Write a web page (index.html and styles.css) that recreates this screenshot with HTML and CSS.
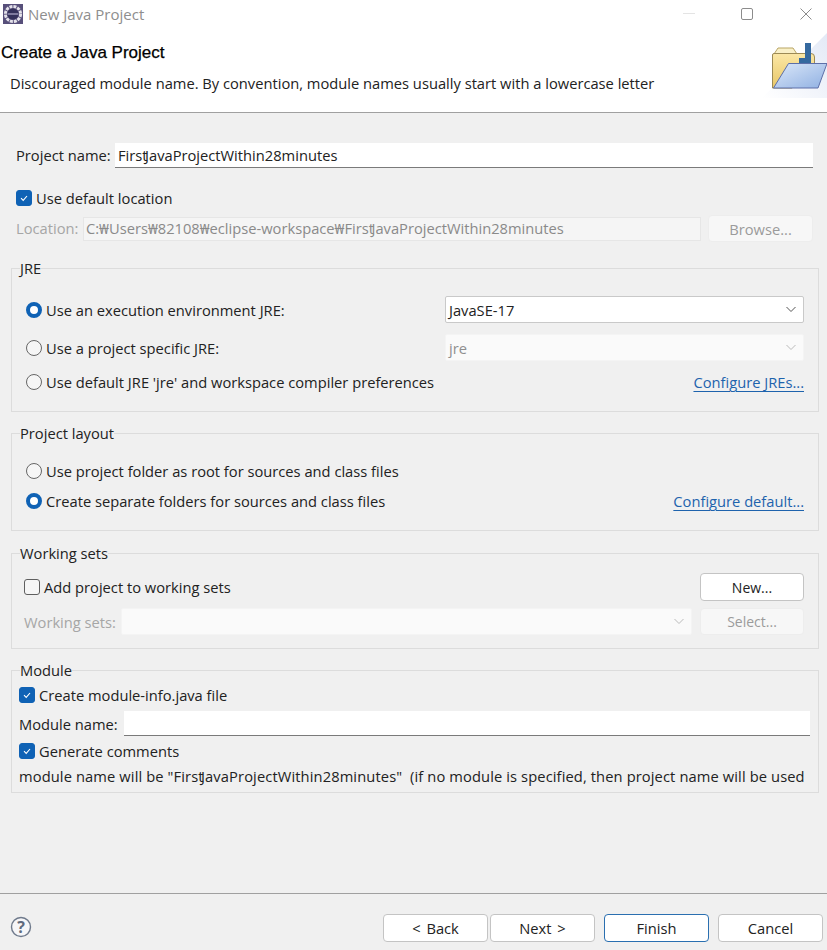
FILE: index.html
```html
<!DOCTYPE html>
<html lang="en">
<head>
<meta charset="utf-8">
<title>New Java Project</title>
<link rel="stylesheet" href="styles.css">
</head>
<body>
<div class="dialog">
  <header class="titlebar">
    <svg class="app-icon" width="20" height="20" viewBox="0 0 20 20"><rect width="20" height="20" fill="#574f7a"/><circle cx="10" cy="10" r="7.6" fill="none" stroke="#e4e2ea" stroke-width="3" stroke-dasharray="3 1"/><circle cx="10" cy="10" r="5.6" fill="#34315a"/><path d="M4.6 9h10.8v2H4.6z" fill="#7f7b9e"/></svg>
    <span class="title-text">New Java Project</span>
    <div class="win-controls">
      <span class="win-min"></span>
      <svg class="win-max" width="12" height="12" viewBox="0 0 12 12"><rect x=".5" y=".5" width="11" height="11" rx="1.5" fill="none" stroke="#8c8c8c"/></svg>
      <svg class="win-close" width="12" height="12" viewBox="0 0 12 12"><path d="M.5.5l11 11M11.5.5l-11 11" stroke="#8c8c8c" fill="none"/></svg>
    </div>
  </header>
  <section class="banner">
    <div class="banner-text">
      <h1>Create a Java Project</h1>
      <p>Discouraged module name. By convention, module names usually start with a lowercase letter</p>
    </div>
    <div class="banner-art">
      <svg width="67" height="68" viewBox="0 0 67 68">
        <defs>
          <linearGradient id="wash" x1="0" y1="1" x2="1" y2="0"><stop offset="0" stop-color="#fff"/><stop offset="1" stop-color="#e3e9f6"/></linearGradient>
          <linearGradient id="back" x1="0" y1="0" x2="0" y2="1"><stop offset="0" stop-color="#fbe7a6"/><stop offset="1" stop-color="#e8c767"/></linearGradient>
          <linearGradient id="front" x1="0" y1="0" x2="1" y2="1"><stop offset="0" stop-color="#dce8f9"/><stop offset="1" stop-color="#8fb0e2"/></linearGradient>
        </defs>
        <path d="M2 68 L67 3 V68Z" fill="url(#wash)"/>
        <path d="M14 24 L18 18 H33 L37 24Z" fill="#f9f0c8" stroke="#b9a565"/>
        <path d="M12.5 58 V25 Q12.5 23.5 14 23.5 H51 Q54.5 23.5 54.5 27 V40 L32 58Z" fill="url(#back)" stroke="#9c8a55"/>
        <path d="M45 13 H51 V33 H39 V28 H45Z" fill="#35699f"/>
        <path d="M28.5 33.5 H67 L58 58 H13.5Z" fill="url(#front)" stroke="#5d6fa8"/>
      </svg>
    </div>
  </section>
  <main class="content">
    <div class="row name-row">
      <label class="label">Project name:</label>
      <div class="field">Firs<span class="tj">t</span>JavaProjectWithin28minutes</div>
    </div>
    <div class="check-row default-loc"><span class="check on"><svg width="10" height="10" viewBox="0 0 10 10"><path d="M2 5.2l2.2 2.2L8 3" fill="none" stroke="#fff" stroke-width="1.1"/></svg></span><span>Use default location</span></div>
    <div class="row loc-row">
      <label class="label muted">Location:</label>
      <div class="field-off">C:₩Users₩82108₩eclipse-workspace₩Firs<span class="tj">t</span>JavaProjectWithin28minutes</div>
      <button class="btn off browse">Browse...</button>
    </div>

    <fieldset class="group jre">
      <legend>JRE</legend>
      <div class="opt-row r1">
        <div class="radio-line"><span class="radio on"></span><span>Use an execution environment JRE:</span></div>
        <div class="combo"><span>JavaSE-17</span><svg width="12" height="7" viewBox="0 0 12 7"><path d="M1.5 1l4.5 4.5L10.5 1" fill="none" stroke="#555"/></svg></div>
      </div>
      <div class="opt-row r2">
        <div class="radio-line"><span class="radio"></span><span>Use a project specific JRE:</span></div>
        <div class="combo off"><span>jre</span><svg width="12" height="7" viewBox="0 0 12 7"><path d="M1.5 1l4.5 4.5L10.5 1" fill="none" stroke="#bbb"/></svg></div>
      </div>
      <div class="opt-row r3">
        <div class="radio-line"><span class="radio"></span><span>Use default JRE 'jre' and workspace compiler preferences</span></div>
        <a class="link">Configure JREs...</a>
      </div>
    </fieldset>

    <fieldset class="group layout">
      <legend>Project layout</legend>
      <div class="opt-row l1">
        <div class="radio-line"><span class="radio"></span><span>Use project folder as root for sources and class files</span></div>
      </div>
      <div class="opt-row l2">
        <div class="radio-line"><span class="radio on"></span><span>Create separate folders for sources and class files</span></div>
        <a class="link">Configure default...</a>
      </div>
    </fieldset>

    <fieldset class="group wsets">
      <legend>Working sets</legend>
      <div class="opt-row w1">
        <div class="check-row"><span class="check"></span><span>Add project to working sets</span></div>
        <button class="btn wbtn">New...</button>
      </div>
      <div class="opt-row w2">
        <label class="label muted">Working sets:</label>
        <div class="combo off grow"><span></span><svg width="12" height="7" viewBox="0 0 12 7"><path d="M1.5 1l4.5 4.5L10.5 1" fill="none" stroke="#bbb"/></svg></div>
        <button class="btn off wbtn">Select...</button>
      </div>
    </fieldset>

    <fieldset class="group module">
      <legend>Module</legend>
      <div class="check-row m1"><span class="check on"><svg width="10" height="10" viewBox="0 0 10 10"><path d="M2 5.2l2.2 2.2L8 3" fill="none" stroke="#fff" stroke-width="1.1"/></svg></span><span>Create module-info.java file</span></div>
      <div class="row m2">
        <label class="label">Module name:</label>
        <div class="field"></div>
      </div>
      <div class="check-row m3"><span class="check on"><svg width="10" height="10" viewBox="0 0 10 10"><path d="M2 5.2l2.2 2.2L8 3" fill="none" stroke="#fff" stroke-width="1.1"/></svg></span><span>Generate comments</span></div>
      <p class="note">module name will be "Firs<span class="tj">t</span>JavaProjectWithin28minutes"&nbsp; (if no module is specified, then project name will be used</p>
    </fieldset>
  </main>
  <footer class="footer">
    <svg class="help" width="22" height="22" viewBox="0 0 22 22"><circle cx="11" cy="11" r="9.5" fill="#f6f6f8" stroke="#6f7a8c" stroke-width="1.4"/><text x="11" y="16.5" text-anchor="middle" class="help-mark">?</text></svg>
    <div class="footer-btns">
      <div class="nav-pair"><button class="btn fbtn">&lt; Back</button><button class="btn fbtn">Next &gt;</button></div>
      <button class="btn fbtn primary">Finish</button>
      <button class="btn fbtn">Cancel</button>
    </div>
  </footer>
</div>
</body>
</html>
```
FILE: styles.css
```css
* { box-sizing: border-box; }
html, body { margin: 0; padding: 0; }
body { width: 827px; height: 950px; overflow: hidden; font-family: "Open Sans", "Noto Sans", sans-serif; font-size: 14.7px; color: #222; background: #f0f0f0; }
.dialog { display: flex; flex-direction: column; height: 950px; }
.tj { letter-spacing: -2.5px; }

.titlebar { height: 27px; background: #fff; display: flex; align-items: center; padding: 0 0 0 3px; flex: none; }
.app-icon { flex: none; }
.title-text { margin-left: 5px; color: #8e8e8e; font-size: 15px; }
.win-controls { margin-left: auto; display: flex; align-items: center; }
.win-min { width: 12px; height: 1px; background: #e4e4e4; margin-right: 46px; }
.win-max { margin-right: 47px; }
.win-close { margin-right: 15px; }

.banner { height: 86px; background: #fff; border-bottom: 1px solid #a0a0a0; display: flex; justify-content: space-between; flex: none; }
.banner-text { padding-top: 15px; }
.banner h1 { margin: 0; padding-left: 1px; font-family: "Liberation Sans", sans-serif; font-size: 17px; font-weight: 400; color: #000; -webkit-text-stroke: .25px #000; line-height: 21px; white-space: nowrap; }
.banner p { margin: 10px 0 0 10px; line-height: 20px; color: #222; white-space: nowrap; }
.banner-art { padding-top: 3px; }

.content { flex: 1; padding: 0 8px 0 11px; display: flex; flex-direction: column; }
.row { display: flex; align-items: center; }
.label { flex: none; white-space: nowrap; }
.muted { color: #a6a6a6; }
.name-row { margin: 29px 6px 0 5px; height: 26px; }
.name-row .label { width: 99px; }
.field { flex: 1; height: 25px; background: #fff; border-bottom: 1px solid #7a7a7a; padding-left: 3px; line-height: 24px; }
.check-row { display: flex; align-items: center; }
.check { flex: none; width: 16px; height: 16px; border: 1px solid #5f5f5f; border-radius: 3px; background: #f6f6f6; display: flex; align-items: center; justify-content: center; margin-right: 4px; }
.check.on { background: #0f62b5; border-color: #0f62b5; }
.default-loc { margin: 18px 0 0 5px; height: 24px; }
.loc-row { margin: 5px 6px 0 5px; height: 27px; }
.loc-row .label { width: 67px; padding-bottom: 2px; }
.field-off { width: 618px; height: 24px; background: #f5f5f5; border: 1px solid #e6e6e6; color: #8a8a8a; padding-left: 2px; line-height: 21px; white-space: nowrap; }
.browse { margin-left: 7px; width: 105px; height: 27px; font-size: 14px; }

.btn { font: inherit; color: #222; background: #fff; border: 1px solid #c4c4c4; border-radius: 4px; padding: 0; }
.btn.off { background: #f7f7f7; border-color: #ededed; color: #9b9b9b; }

.group { margin: 0; padding: 0 14px; border: 1px solid #dcdcdc; display: block; min-width: 0; flex: none; }
.group legend { padding: 0; margin-left: -6px; line-height: 20px; height: 20px; }
.opt-row { display: flex; align-items: center; justify-content: space-between; }
.radio-line { display: flex; align-items: center; }
.radio { flex: none; width: 16px; height: 16px; border-radius: 50%; border: 1px solid #666; background: #f6f6f6; margin-right: 4px; }
.radio.on { border: 4.5px solid #0f62b5; background: #fff; }
.combo { width: 359px; height: 27px; background: #fff; border: 1px solid #c9c9c9; border-radius: 2px; display: flex; align-items: center; justify-content: space-between; padding: 0 6px 0 3px; }
.combo.off { background: #fafafa; border-color: #f4f4f4; color: #8f8f8f; }
.grow { flex: 1; width: auto; }
.link { color: #1e63ad; text-decoration: underline; text-underline-offset: 3px; }

.jre { margin-top: 16px; height: 154px; }
.r1 { margin-top: 18px; height: 27px; }
.r2 { margin-top: 11px; height: 27px; }
.r3 { margin-top: 9px; height: 24px; }

.layout { margin-top: 11px; height: 108px; }
.l1 { margin-top: 16px; height: 24px; }
.l2 { margin-top: 6px; height: 24px; }

.wsets { margin-top: 12px; height: 106px; padding: 0 14px 0 12px; }
.wsets legend { margin-left: -4px; }
.w1 { margin-top: 10px; height: 28px; }
.w2 { margin-top: 7px; height: 27px; }
.wbtn { width: 104px; height: 28px; font-size: 14px; }
.w2 .wbtn { height: 27px; }
.w2 .label { width: 97px; }
.w2 .combo { margin-right: 8px; }

.module { margin-top: 11px; height: 133px; padding: 0 8px 0 7px; }
.module legend { margin-left: 1px; }
.m1 { height: 20px; margin-top: 5px; }
.m2 { height: 25px; margin-top: 6px; }
.m2 .label { width: 105px; }
.m3 { height: 20px; margin-top: 5px; }
.note { margin: 5px 0 0; line-height: 20px; white-space: nowrap; overflow: hidden; letter-spacing: .11px; }

.footer { height: 57px; border-top: 1px solid #a0a0a0; display: flex; align-items: flex-start; justify-content: space-between; padding: 20px 4px 0 10px; flex: none; }
.help { margin-top: 2px; }
.help-mark { font-size: 16px; font-weight: 700; fill: #5f6a7d; font-family: "Open Sans", sans-serif; }
.footer-btns { display: flex; gap: 9px; }
.nav-pair { display: flex; gap: 2px; }
.fbtn { width: 105px; height: 28px; word-spacing: 2px; }
.primary { border-color: #2a6fb0; }
```
